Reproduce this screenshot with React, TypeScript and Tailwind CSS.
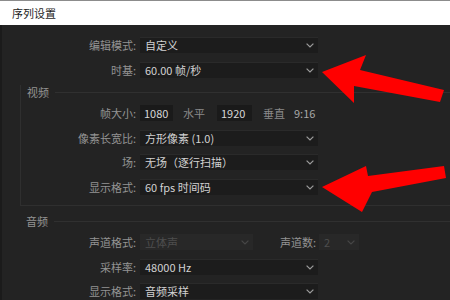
import React from "react";

const CJK = { fontFamily: '"Noto Sans CJK SC", "Noto Sans", sans-serif' };

const Chevron = ({ dim }: { dim?: boolean }) => (
  <svg width="8" height="5" viewBox="0 0 8 5" className="shrink-0">
    <polyline points="0.6,0.6 4,4 7.4,0.6" fill="none" stroke={dim ? "#474747" : "#9c9c9c"} strokeWidth="1.2" />
  </svg>
);

const Select = ({ value, w = "w-[178px]", dim }: { value: string; w?: string; dim?: boolean }) => (
  <div
    className={`${w} h-[16px] flex items-center justify-between pl-[5px] pr-[4px] ${
      dim ? "bg-[#282828] text-[#4e4e4e]" : "bg-[#1c1c1c] text-[#d2d2d2] border-t border-[#2a2a2a]"
    }`}
  >
    <span className="text-[11px] leading-none whitespace-nowrap">{value}</span>
    <Chevron dim={dim} />
  </div>
);

const Label = ({ text, w }: { text: string; w: string }) => (
  <div className={`${w} shrink-0 text-right text-[11px] leading-none text-[#939393] whitespace-nowrap`}>{text}</div>
);

const Row = ({ label, lw, children, className = "" }: { label: string; lw: string; children: React.ReactNode; className?: string }) => (
  <div className={`flex items-center h-[16px] ${className}`}>
    <Label text={label} w={lw} />
    <div className="ml-[4px] flex items-center">{children}</div>
  </div>
);

const Header = ({ text }: { text: string }) => (
  <div className="flex items-center h-[14px]">
    <span className="text-[11px] leading-none text-[#939393]">{text}</span>
    <div className="ml-[6px] flex-1 h-px bg-[#303030]" />
  </div>
);

export default function App() {
  return (
    <div className="relative w-[450px] h-[300px] overflow-hidden bg-[#232323]" style={CJK}>
      <div className="h-px bg-[#8c8c8c]" />
      <div className="h-[24px] bg-white flex items-center pl-[12px]">
        <span className="text-[11px] leading-none text-[#1e1e1e]">序列设置</span>
      </div>
      <div className="border-l-[2px] border-[#1b1b1b] h-full">
        <div className="pt-[12px]">
          <Row label="编辑模式:" lw="w-[134px]">
            <Select value="自定义" />
          </Row>
          <Row label="时基:" lw="w-[134px]" className="mt-[9px]">
            <Select value="60.00  帧/秒" />
          </Row>
        </div>

        <div className="mt-[7px] ml-[18px] border-l border-b border-[#2f2f2f] pb-[10px]">
          <div className="pl-[6px]">
            <Header text="视频" />
          </div>
          <Row label="帧大小:" lw="w-[115px]" className="mt-[6px]">
            <div className="w-[33px] h-[16px] bg-[#1a1a1a] flex items-center pl-[4px] text-[11px] leading-none text-[#d6d6d6]">1080</div>
            <span className="ml-[10px] text-[11px] leading-none text-[#8a8a8a]">水平</span>
            <div className="ml-[12px] w-[35px] h-[16px] bg-[#1a1a1a] flex items-center pl-[4px] text-[11px] leading-none text-[#d6d6d6]">1920</div>
            <span className="ml-[11px] text-[11px] leading-none text-[#8a8a8a]">垂直</span>
            <span className="ml-[9px] text-[11px] leading-none text-[#a8a8a8]">9:16</span>
          </Row>
          <Row label="像素长宽比:" lw="w-[115px]" className="mt-[9px]">
            <Select value="方形像素 (1.0)" />
          </Row>
          <Row label="场:" lw="w-[115px]" className="mt-[8px]">
            <Select value="无场（逐行扫描）" />
          </Row>
          <Row label="显示格式:" lw="w-[115px]" className="mt-[9px]">
            <Select value="60 fps 时间码" />
          </Row>
        </div>

        <div className="mt-[8px] ml-[24px]">
          <Header text="音频" />
        </div>
        <Row label="声道格式:" lw="w-[134px]" className="mt-[6px]">
          <Select value="立体声" w="w-[113px]" dim />
          <span className="ml-[27px] text-[11px] leading-none text-[#939393]">声道数:</span>
          <div className="ml-[3px]">
            <Select value="2" w="w-[40px]" dim />
          </div>
        </Row>
        <Row label="采样率:" lw="w-[134px]" className="mt-[9px]">
          <Select value="48000 Hz" />
        </Row>
        <Row label="显示格式:" lw="w-[134px]" className="mt-[8px]">
          <Select value="音频采样" />
        </Row>
      </div>

      <svg className="absolute left-0 top-0 pointer-events-none" width="450" height="300" viewBox="0 0 450 300">
        <polygon points="322,72 366,55 360,70 444,90 440,102 354,86 354,103" fill="#ff0000" />
        <polygon points="322,187 366,166 368,176 444,166 446,178 372,192 362,212" fill="#ff0000" />
      </svg>
    </div>
  );
}
